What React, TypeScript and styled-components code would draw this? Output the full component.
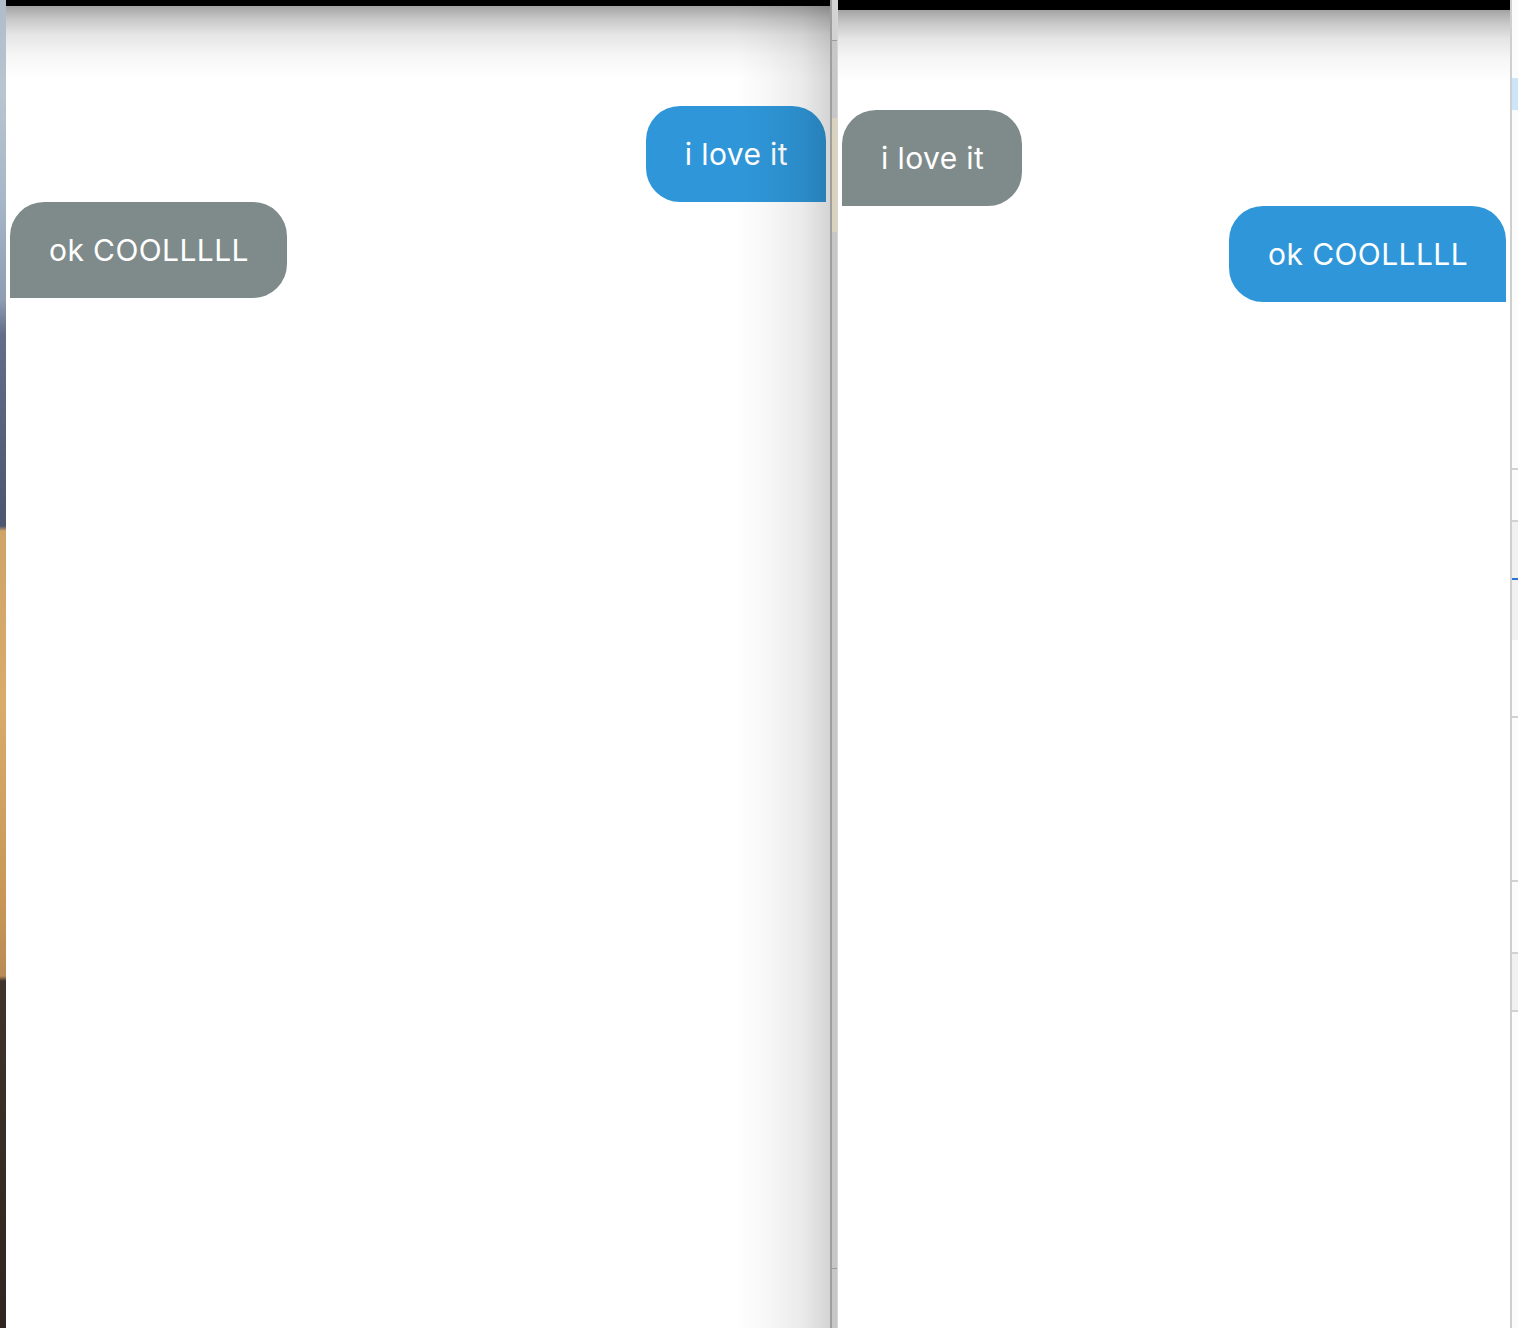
import React from "react";
import styled, { createGlobalStyle, css } from "styled-components";

const GlobalStyle = createGlobalStyle`
  html, body {
    margin: 0;
    padding: 0;
    background: #ffffff;
    overflow: hidden;
  }
  body {
    font-family: Inter, "Noto Sans", "Liberation Sans", sans-serif;
  }
`;

const Screen = styled.div`
  display: flex;
  width: 1518px;
  height: 1328px;
  overflow: hidden;
`;

const Wallpaper = styled.div`
  flex: 0 0 6px;
  background: linear-gradient(
    to bottom,
    #aebccb 0px,
    #b9c5d0 90px,
    #a6b7c8 200px,
    #8e9db2 300px,
    #626d89 335px,
    #555f7a 450px,
    #4d5670 526px,
    #cfa468 531px,
    #d9ab6c 700px,
    #c89756 900px,
    #b98b56 976px,
    #3f332b 981px,
    #2f2621 1328px
  );
`;

const Window = styled.div<{ $width: number; $shadeRight?: boolean; $border?: boolean }>`
  position: relative;
  flex: 0 0 ${(p) => p.$width}px;
  display: flex;
  flex-direction: column;
  background: #ffffff;
  overflow: hidden;
  ${(p) =>
    p.$border &&
    css`
      border-right: 2px solid #cfcfcf;
    `}
  ${(p) =>
    p.$shadeRight &&
    css`
      &::after {
        content: "";
        position: absolute;
        top: 0;
        right: 0;
        bottom: 0;
        width: 96px;
        pointer-events: none;
        background: linear-gradient(
          to right,
          rgba(0, 0, 0, 0) 0%,
          rgba(0, 0, 0, 0.03) 35%,
          rgba(0, 0, 0, 0.08) 70%,
          rgba(0, 0, 0, 0.17) 100%
        );
        z-index: 3;
      }
    `}
`;

const TopBar = styled.div<{ $h: number }>`
  position: relative;
  flex: 0 0 ${(p) => p.$h}px;
  background: #000000;
  z-index: 2;
  &::after {
    content: "";
    position: absolute;
    left: 0;
    right: 0;
    top: 100%;
    height: 72px;
    pointer-events: none;
    background: linear-gradient(
      to bottom,
      rgba(0, 0, 0, 0.36) 0%,
      rgba(0, 0, 0, 0.22) 18%,
      rgba(0, 0, 0, 0.1) 40%,
      rgba(0, 0, 0, 0.035) 68%,
      rgba(0, 0, 0, 0) 100%
    );
  }
`;

const Messages = styled.div`
  display: flex;
  flex-direction: column;
  align-items: flex-start;
  padding: 100px 4px 0;
`;

const Bubble = styled.div<{ $mine?: boolean }>`
  box-sizing: border-box;
  height: 96px;
  padding: 0 38px 0 39px;
  display: flex;
  align-items: center;
  color: #ffffff;
  font-size: 30px;
  letter-spacing: 0.4px;
  line-height: 36px;
  white-space: nowrap;
  ${(p) =>
    p.$mine
      ? css`
          align-self: flex-end;
          background: #2f97d9;
          border-radius: 34px 34px 0 34px;
        `
      : css`
          align-self: flex-start;
          background: #7f8b8b;
          border-radius: 34px 34px 34px 0;
        `}
`;

const Divider = styled.div`
  flex: 0 0 8px;
  box-sizing: border-box;
  display: flex;
  flex-direction: column;
  border-left: 2px solid #9f9f9f;
  border-right: 1px solid #d6d6d6;
  background: #c7c7c7;
`;

type DivKind = "top" | "plain" | "tan" | "mark";

const DividerPart = styled.div<{ $kind: DivKind; $h?: number }>`
  flex: ${(p) => (p.$h ? `0 0 ${p.$h}px` : "1 1 auto")};
  background: ${(p) =>
    p.$kind === "top"
      ? "#d3d3d3"
      : p.$kind === "tan"
      ? "#d9d2bf"
      : p.$kind === "mark"
      ? "#9c9c9c"
      : "#c7c7c7"};
`;

type EdgeKind = "white" | "sky" | "line" | "grey" | "accent";

const Edge = styled.div`
  flex: 1 1 auto;
  display: flex;
  flex-direction: column;
  background: #fcfcfc;
`;

const EdgePart = styled.div<{ $kind: EdgeKind; $h?: number }>`
  flex: ${(p) => (p.$h ? `0 0 ${p.$h}px` : "1 1 auto")};
  background: ${(p) =>
    p.$kind === "sky"
      ? "#cde5f8"
      : p.$kind === "line"
      ? "#d2d2d2"
      : p.$kind === "grey"
      ? "#f1f1f1"
      : p.$kind === "accent"
      ? "#2c72d8"
      : "#fcfcfc"};
`;

const dividerParts: { kind: DivKind; h?: number }[] = [
  { kind: "top", h: 40 },
  { kind: "mark", h: 1 },
  { kind: "plain", h: 77 },
  { kind: "tan", h: 114 },
  { kind: "plain", h: 1036 },
  { kind: "mark", h: 1 },
  { kind: "plain" },
];

const edgeParts: { kind: EdgeKind; h?: number }[] = [
  { kind: "white", h: 78 },
  { kind: "sky", h: 32 },
  { kind: "white", h: 358 },
  { kind: "line", h: 2 },
  { kind: "white", h: 50 },
  { kind: "line", h: 2 },
  { kind: "grey", h: 56 },
  { kind: "accent", h: 2 },
  { kind: "grey", h: 60 },
  { kind: "white", h: 76 },
  { kind: "line", h: 2 },
  { kind: "white", h: 162 },
  { kind: "line", h: 2 },
  { kind: "white", h: 70 },
  { kind: "line", h: 2 },
  { kind: "grey", h: 56 },
  { kind: "line", h: 2 },
  { kind: "white" },
];

export default function App() {
  return (
    <>
      <GlobalStyle />
      <Screen>
        <Wallpaper />
        <Window $width={824} $shadeRight>
          <TopBar $h={6} />
          <Messages>
            <Bubble $mine>i love it</Bubble>
            <Bubble>ok COOLLLLL</Bubble>
          </Messages>
        </Window>
        <Divider>
          {dividerParts.map((d, i) => (
            <DividerPart key={i} $kind={d.kind} $h={d.h} />
          ))}
        </Divider>
        <Window $width={672} $border>
          <TopBar $h={10} />
          <Messages>
            <Bubble>i love it</Bubble>
            <Bubble $mine>ok COOLLLLL</Bubble>
          </Messages>
        </Window>
        <Edge>
          {edgeParts.map((e, i) => (
            <EdgePart key={i} $kind={e.kind} $h={e.h} />
          ))}
        </Edge>
      </Screen>
    </>
  );
}
